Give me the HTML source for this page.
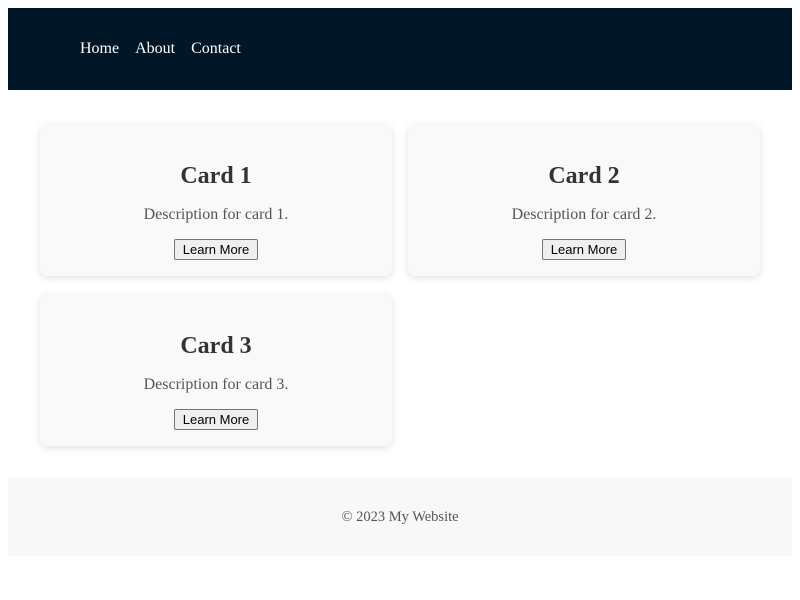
<!DOCTYPE html>
<html><head><style>
body{margin:0;background:#fff;font-family:"Liberation Serif",serif;}
header{position:absolute;left:8px;top:8px;width:784px;height:82px;background:#011627;}
nav{position:absolute;left:72px;top:32px;font-size:16px;color:#fff;}
nav span{margin-right:16px;}
.card{position:absolute;width:352px;height:152px;background:#f9f9f9;border-radius:8px;box-shadow:0 2px 8px rgba(0,0,0,0.12);text-align:center;}
.card h2{position:absolute;left:0;right:0;top:38px;margin:0;font-size:24px;font-weight:bold;color:#333;line-height:28px;}
.card p{position:absolute;left:0;right:0;top:81px;margin:0;font-size:16px;color:#555;line-height:20px;}
.card button{position:absolute;left:134px;top:115px;width:84px;height:21px;font-family:"Liberation Sans",sans-serif;font-size:13px;padding:0;background:#efefef;border:1px solid #767676;border-radius:2px;color:#000;}
footer{position:absolute;left:8px;top:478px;width:784px;height:78px;background:#f8f8f8;text-align:center;font-size:14.5px;color:#555;line-height:78px;}
</style></head><body>
<header><nav><span>Home</span><span>About</span><span>Contact</span></nav></header>
<div class="card" style="left:40px;top:124px"><h2>Card 1</h2><p>Description for card 1.</p><button>Learn More</button></div>
<div class="card" style="left:408px;top:124px"><h2>Card 2</h2><p>Description for card 2.</p><button>Learn More</button></div>
<div class="card" style="left:40px;top:294px"><h2>Card 3</h2><p>Description for card 3.</p><button>Learn More</button></div>
<footer><span>© 2023 My Website</span></footer>
</body></html>
